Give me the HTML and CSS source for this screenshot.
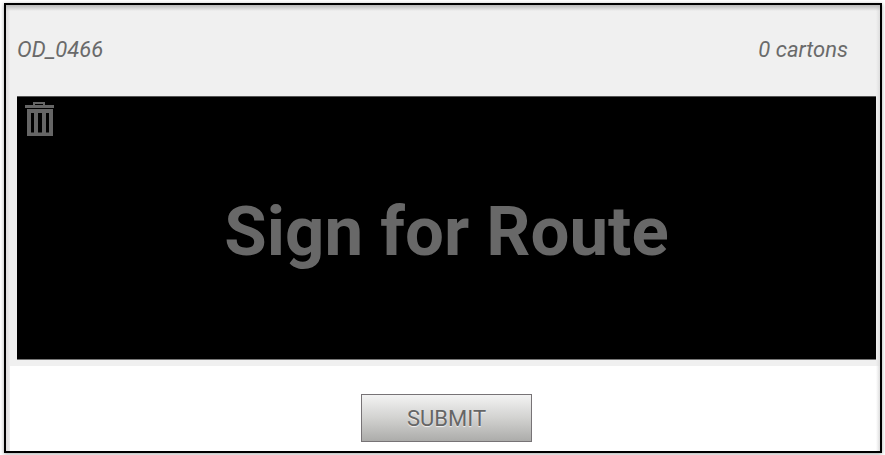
FILE: index.html
```html
<!DOCTYPE html>
<html lang="en">
<head>
<meta charset="utf-8">
<title>Sign for Route</title>
<link rel="stylesheet" href="styles.css">
</head>
<body>
<main class="panel">
  <section class="route">
    <header class="summary">
      <span>OD_0466</span>
      <span>0 cartons</span>
    </header>
    <div class="pad">
      <button class="clear" type="button" aria-label="Clear signature">
        <svg viewBox="0 0 30 36" width="30" height="36" aria-hidden="true">
          <path class="lid" d="M10 4.500V2H20V4.500"/>
          <path class="fill" d="M1 4H30V7H1Z"/>
          <path class="fill" fill-rule="evenodd" d="M3 8H29V35H3ZM7 12V31.500H10V12ZM14 12V31.500H18V12ZM22 12V31.500H25V12Z"/>
        </svg>
      </button>
      <h1 class="prompt">Sign for Route</h1>
    </div>
  </section>
  <footer class="actions">
    <button class="submit" type="submit">SUBMIT</button>
  </footer>
</main>
</body>
</html>
```

FILE: styles.css
```css
* {
  box-sizing: border-box;
}

body {
  margin: 0;
  padding: 3px 3px 2px 4px;
  min-height: 100vh;
  display: flex;
  background: #fff;
  color: #6a6a6a;
  font-family: Roboto, sans-serif;
}

.panel {
  position: relative;
  flex: 1;
  display: flex;
  flex-direction: column;
  border: 2px solid #000;
  background: #fff;
  box-shadow: 0 1px 4px rgba(0, 0, 0, 0.35);
}

/* Inner shading along the frame's top and sides */
.panel::after {
  content: "";
  position: absolute;
  inset: 0;
  pointer-events: none;
  background:
    linear-gradient(#b9b9b9, rgba(240, 240, 240, 0)) top / 100% 6px no-repeat,
    linear-gradient(to right, #dddbdc, #eeeeee) left / 4px 100% no-repeat,
    linear-gradient(to left, #dddddd, rgba(240, 240, 240, 0)) right / 4px 100% no-repeat;
}

.route {
  flex: 1;
  display: flex;
  flex-direction: column;
  padding: 0 4px 6px 11px;
  background: #f0f0f0;
}

.summary {
  display: flex;
  justify-content: space-between;
  align-items: center;
  height: 91px;
  padding: 0 28px 2px 0;
  font-size: 22px;
  font-style: italic;
  line-height: 26px;
}

.pad {
  position: relative;
  flex: 1;
  display: flex;
  align-items: center;
  justify-content: center;
  border-top: 1px solid #555;
  border-bottom: 1px solid #777;
  background: #000;
}

.clear {
  position: absolute;
  top: 4px;
  left: 7px;
  padding: 0;
  border: 0;
  background: none;
  color: #666;
  cursor: pointer;
}

.clear svg {
  display: block;
}

.fill {
  fill: currentColor;
}

.lid {
  fill: none;
  stroke: currentColor;
  stroke-width: 2;
}

.prompt {
  margin: 0;
  padding-top: 8px;
  color: #686868;
  font-size: 69px;
  font-weight: 700;
  line-height: 80px;
}

.actions {
  display: flex;
  justify-content: center;
  padding: 28px 4px 9px 11px;
}

.submit {
  width: 171px;
  height: 48px;
  padding: 0;
  border: 1px solid #777376;
  background: linear-gradient(#f3f3f3, #d2d2d0 50%, #acacaa);
  color: #666;
  font: 22px Roboto, sans-serif;
  text-shadow: 0 1px 1px #f3f3f3;
  cursor: pointer;
}
```
